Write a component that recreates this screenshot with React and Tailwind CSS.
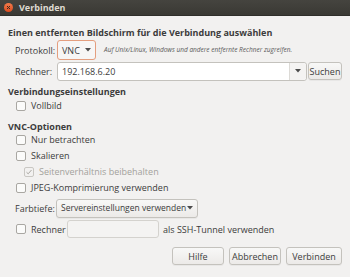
import React from "react";

function Check({ checked = false, disabled = false }) {
  return (
    <span
      className={`w-[10px] h-[10px] rounded-[2px] border flex items-center justify-center shrink-0 ${
        disabled ? "border-[#c9c7c3] bg-[#f2f1f0]" : "border-[#a9a7a2] bg-[#fbfbfa]"
      }`}
    >
      {checked && (
        <svg width="8" height="8" viewBox="0 0 8 8">
          <path d="M1.5 4.2 L3.2 5.8 L6.5 2" fill="none" stroke="#a9a7a2" strokeWidth="1" />
        </svg>
      )}
    </span>
  );
}

function CheckRow({ label, checked, disabled, className = "" }) {
  return (
    <div className={`flex items-center gap-[5px] h-[15px] ${className}`}>
      <Check checked={checked} disabled={disabled} />
      <span className={disabled ? "text-[#a3a19c]" : "text-[#3c3c3c]"}>{label}</span>
    </div>
  );
}

function Arrow() {
  return (
    <svg width="6" height="4" viewBox="0 0 6 4" className="shrink-0">
      <path d="M0 0 L6 0 L3 3.5 Z" fill="#4c4c4c" />
    </svg>
  );
}

function Button({ children, className = "" }) {
  return (
    <div
      className={`h-[18px] flex items-center justify-center rounded-[3px] border border-[#c4c2bd] bg-gradient-to-b from-[#f8f8f7] to-[#eceae8] shadow-[0_1px_0_rgba(0,0,0,0.04)] text-[#3c3c3c] whitespace-nowrap ${className}`}
    >
      {children}
    </div>
  );
}

export default function App() {
  return (
    <div
      className="w-[350px] h-[277px] bg-[#f2f1f0] text-[9px] leading-none text-[#3c3c3c] flex flex-col overflow-hidden"
      style={{ fontFamily: "'Open Sans', 'DejaVu Sans', sans-serif" }}
    >
      {/* title bar */}
      <div className="h-[16px] bg-gradient-to-b from-[#45443f] to-[#3a3934] flex items-center px-[4px] gap-[6px] border-b border-[#2f2e2a]">
        <div className="w-[9px] h-[9px] rounded-full bg-gradient-to-b from-[#f37a4a] to-[#dc4b1d] flex items-center justify-center">
          <svg width="5" height="5" viewBox="0 0 5 5">
            <path d="M1 1 L4 4 M4 1 L1 4" stroke="#3a2a22" strokeWidth="1" />
          </svg>
        </div>
        <span className="text-[#dfdbd2] font-bold text-[9px]">Verbinden</span>
      </div>

      <div className="flex flex-col px-[8px] pt-[11px]">
        <div className="font-bold h-[10px] flex items-center">Einen entfernten Bildschirm für die Verbindung auswählen</div>

        <div className="flex items-center mt-[3px] pl-[7px] h-[20px]">
          <span className="w-[42px]">Protokoll:</span>
          <div className="w-[39px] h-[20px] rounded-[3px] border border-[#e49e7e] bg-[#f7f6f5] flex items-center justify-between px-[4px]">
            <span>VNC</span>
            <Arrow />
          </div>
          <span className="ml-[8px] italic text-[6.5px] text-[#5a5a5a] whitespace-nowrap">
            Auf Unix/Linux, Windows und andere entfernte Rechner zugreifen.
          </span>
        </div>

        <div className="flex items-center mt-[1px] pl-[7px] h-[20px]">
          <span className="w-[42px]">Rechner:</span>
          <div className="w-[250px] h-[19px] rounded-[3px] border border-[#c4c2bd] bg-white flex items-center">
            <span className="flex-1 pl-[4px]">192.168.6.20</span>
            <div className="w-[17px] h-full border-l border-[#dcdad6] bg-[#f4f3f2] flex items-center justify-center rounded-r-[3px]">
              <Arrow />
            </div>
          </div>
          <Button className="w-[34px] ml-[1px] h-[17px]">Suchen</Button>
        </div>

        <div className="font-bold mt-[5px] h-[10px] flex items-center">Verbindungseinstellungen</div>
        <CheckRow label="Vollbild" className="mt-[2px] pl-[8px]" />

        <div className="font-bold mt-[8px] h-[10px] flex items-center">VNC-Optionen</div>
        <CheckRow label="Nur betrachten" className="mt-[1px] pl-[8px]" />
        <CheckRow label="Skalieren" className="mt-[1px] pl-[8px]" />
        <CheckRow label="Seitenverhältnis beibehalten" checked disabled className="mt-[1px] pl-[16px]" />
        <CheckRow label="JPEG-Komprimierung verwenden" className="mt-[1px] pl-[8px]" />

        <div className="flex items-center mt-[3px] pl-[7px] h-[20px]">
          <span className="w-[41px] whitespace-nowrap">Farbtiefe:</span>
          <Button className="w-[142px] h-[19px] !justify-between px-[4px] text-[8.5px]">
            <span>Servereinstellungen verwenden</span>
            <Arrow />
          </Button>
        </div>

        <div className="flex items-center mt-[2px] pl-[8px] h-[18px]">
          <Check />
          <span className="ml-[5px] w-[36px]">Rechner</span>
          <div className="w-[92px] h-[18px] rounded-[3px] border border-[#d4d2ce] bg-[#f4f3f2]" />
          <span className="ml-[4px]">als SSH-Tunnel verwenden</span>
        </div>

        <div className="flex justify-end gap-[5px] mt-[9px]">
          <Button className="w-[52px]">Hilfe</Button>
          <Button className="w-[52px]">Abbrechen</Button>
          <Button className="w-[56px]">Verbinden</Button>
        </div>
      </div>
    </div>
  );
}
